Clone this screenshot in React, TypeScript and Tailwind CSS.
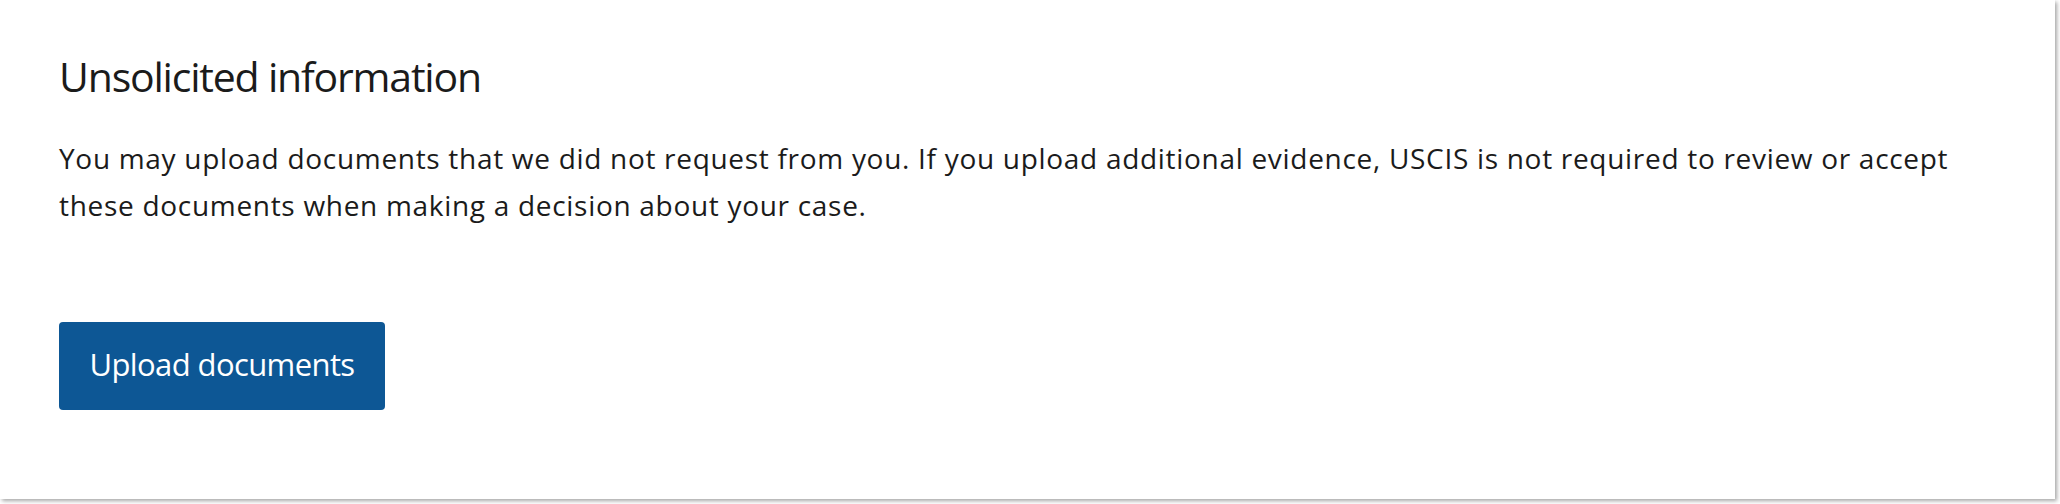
export default function App() {
  return (
    <div className="w-[2060px] h-[504px] bg-white" style={{ fontFamily: "'Open Sans', Lato, sans-serif" }}>
      <section className="w-[2055px] h-[499px] bg-white shadow-[2px_2px_4px_rgba(0,0,0,0.35)] px-[59px] pt-[52px]">
        {/* Heading */}
        <h2 className="text-[41px] leading-[48px] tracking-[-1.2px] text-[#1b1b1b] font-normal">Unsolicited information</h2>

        {/* Description */}
        <p className="mt-[35px] text-[28px] leading-[47px] tracking-[0.7px] text-[#1b1b1b]">
          You may upload documents that we did not request from you. If you upload additional evidence, USCIS is not
          required to review or accept these documents when making a decision about your case.
        </p>

        {/* Action */}
        <button className="mt-[93px] h-[88px] w-[326px] pb-[4px] flex items-center justify-center rounded-[4px] bg-[#0d5795] text-white text-[31px] tracking-[-0.6px] leading-none">
          Upload documents
        </button>
      </section>
    </div>
  );
}
